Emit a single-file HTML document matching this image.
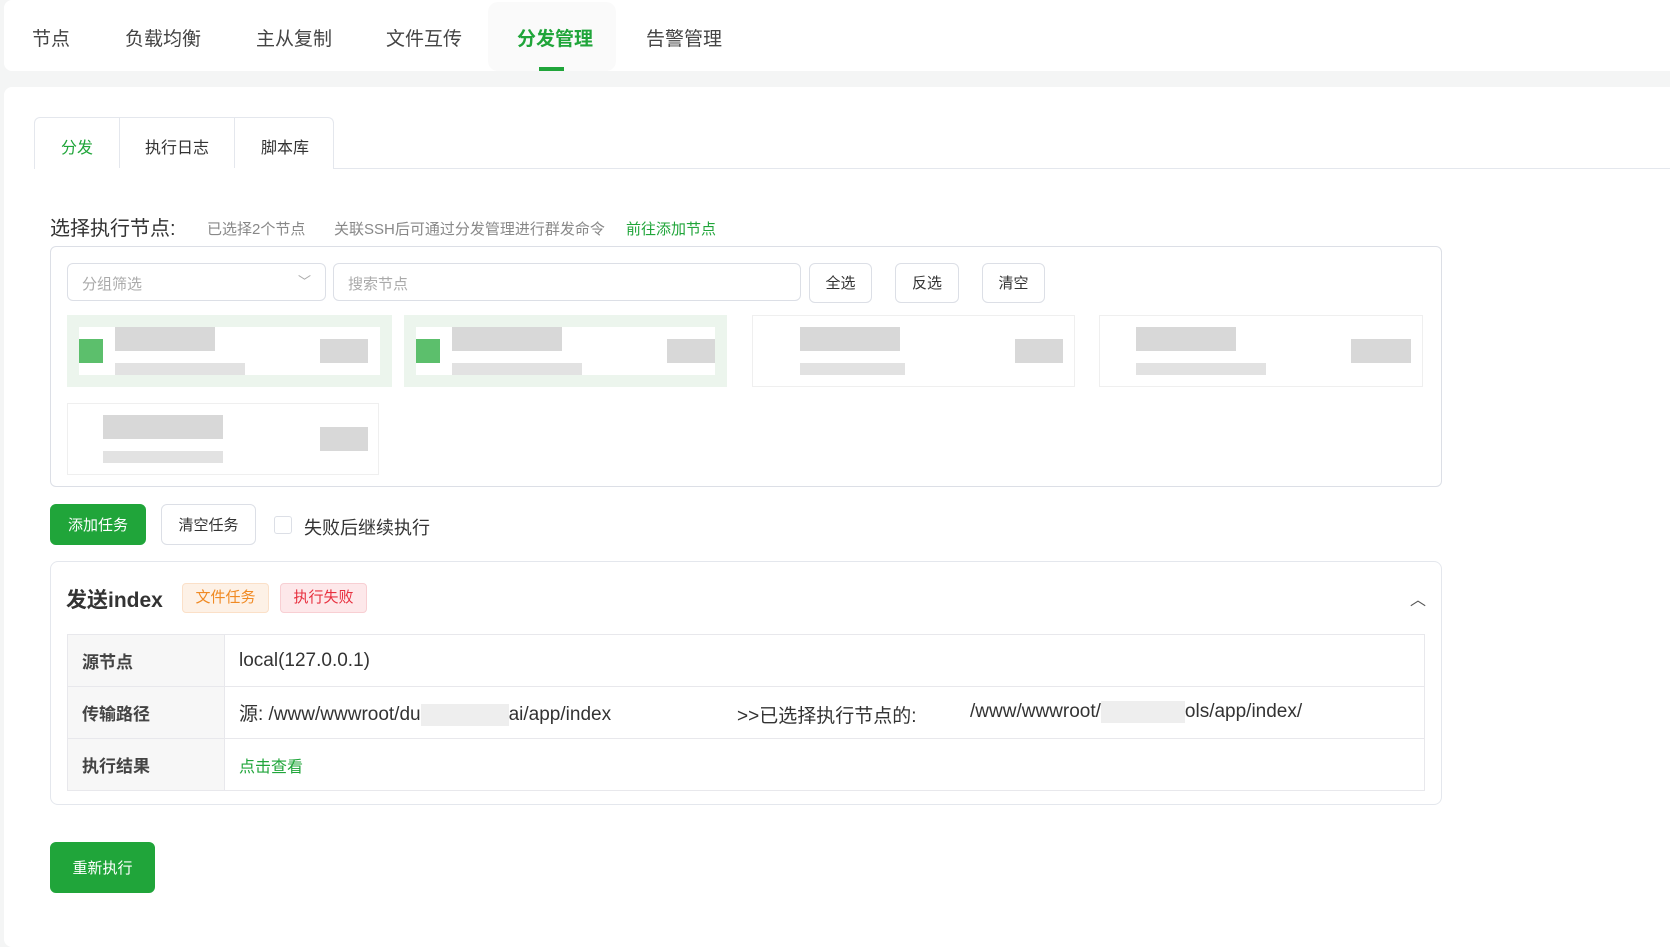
<!DOCTYPE html>
<html><head><meta charset="utf-8"><style>
*{box-sizing:border-box;margin:0;padding:0}
body{width:1670px;height:939px;background:#f4f5f5;font-family:"Liberation Sans","Noto Sans CJK SC",sans-serif;color:#333;position:relative;overflow:hidden}
.a{position:absolute}
.nav{left:4px;top:0;width:1680px;height:71px;background:#fff;border-radius:8px}
.nav span{position:absolute;top:24px;font-size:19px;color:#444}
.main{left:4px;top:87px;width:1680px;height:860px;background:#fff;border-radius:8px}
.btn{position:absolute;border:1px solid #dcdfe6;border-radius:6px;background:#fff;font-size:15px;color:#333;text-align:center}
.card{position:absolute;background:#fff;border:1px solid #eee;opacity:.9}
.px{position:absolute;background:#d8d8d8}
td{border:1px solid #e8e8ec;height:52px;font-size:19px;padding-left:14px}
td.l{background:#f7f7f7;font-weight:bold;width:157px;color:#444;font-size:17px}
</style></head><body>
<div class="a nav">
<div class="a" style="left:484px;top:2px;width:128px;height:69px;background:#fafafa;border-radius:10px"></div>
<span style="left:28px">节点</span><span style="left:121px">负载均衡</span><span style="left:252px">主从复制</span><span style="left:382px">文件互传</span><span style="left:513px;color:#20a53a;font-weight:bold">分发管理</span><span style="left:642px">告警管理</span>
<div class="a" style="left:535px;top:67px;width:25px;height:4px;background:#20a53a"></div>
</div>
<div class="a main"></div>
<div class="a" style="left:34px;top:168px;width:1640px;height:1px;background:#e4e7ed"></div>
<div class="a" style="left:34px;top:117px;width:300px;height:52px;border:1px solid #e4e7ed;border-bottom:none;border-radius:6px 6px 0 0;background:#fff"></div>
<div class="a" style="left:119px;top:117px;width:1px;height:51px;background:#e4e7ed"></div>
<div class="a" style="left:234px;top:117px;width:1px;height:51px;background:#e4e7ed"></div>
<div class="a" style="left:61px;top:134px;font-size:16px;color:#20a53a">分发</div>
<div class="a" style="left:145px;top:134px;font-size:16px">执行日志</div>
<div class="a" style="left:261px;top:134px;font-size:16px">脚本库</div>
<div class="a" style="left:50px;top:212px;font-size:20px">选择执行节点:</div>
<div class="a" style="left:207px;top:218px;font-size:15px;color:#888">已选择2个节点</div>
<div class="a" style="left:334px;top:218px;font-size:15px;color:#888">关联SSH后可通过分发管理进行群发命令</div>
<div class="a" style="left:626px;top:218px;font-size:15px;color:#20a53a">前往添加节点</div>
<div class="a" style="left:50px;top:246px;width:1392px;height:241px;border:1px solid #dcdfe6;border-radius:6px"></div>
<div class="btn" style="left:67px;top:263px;width:259px;height:38px;text-align:left;padding:9px 14px;color:#aaa">分组筛选<span style="position:absolute;right:14px;top:7px;font-size:13px">﹀</span></div>
<div class="btn" style="left:333px;top:263px;width:468px;height:38px;text-align:left;padding:9px 14px;color:#aaa">搜索节点</div>
<div class="btn" style="left:809px;top:263px;width:63px;height:40px;line-height:40px">全选</div>
<div class="btn" style="left:895px;top:263px;width:64px;height:40px;line-height:40px">反选</div>
<div class="btn" style="left:982px;top:263px;width:63px;height:40px;line-height:40px">清空</div>
<div class="card" style="left:67px;top:315px;width:325px;height:72px;border:12px solid #eaf5ec"></div>
<div class="card" style="left:404px;top:315px;width:323px;height:72px;border:12px solid #eaf5ec"></div>
<div class="card" style="left:752px;top:315px;width:323px;height:72px"></div>
<div class="card" style="left:1099px;top:315px;width:324px;height:72px"></div>
<div class="card" style="left:67px;top:403px;width:312px;height:72px"></div>
<div class="px" style="left:79px;top:339px;width:24px;height:24px;background:#5cbf6c"></div>
<div class="px" style="left:416px;top:339px;width:24px;height:24px;background:#5cbf6c"></div>
<div class="px" style="left:115px;top:327px;width:100px;height:24px"></div><div class="px" style="left:115px;top:363px;width:130px;height:12px;background:#e2e2e2"></div><div class="px" style="left:320px;top:339px;width:48px;height:24px"></div>
<div class="px" style="left:452px;top:327px;width:110px;height:24px"></div><div class="px" style="left:452px;top:363px;width:130px;height:12px;background:#e2e2e2"></div><div class="px" style="left:667px;top:339px;width:48px;height:24px"></div>
<div class="px" style="left:800px;top:327px;width:100px;height:24px"></div><div class="px" style="left:800px;top:363px;width:105px;height:12px;background:#e2e2e2"></div><div class="px" style="left:1015px;top:339px;width:48px;height:24px"></div>
<div class="px" style="left:1136px;top:327px;width:100px;height:24px"></div><div class="px" style="left:1136px;top:363px;width:130px;height:12px;background:#e2e2e2"></div><div class="px" style="left:1351px;top:339px;width:60px;height:24px"></div>
<div class="px" style="left:103px;top:415px;width:120px;height:24px"></div><div class="px" style="left:103px;top:451px;width:120px;height:12px;background:#e2e2e2"></div><div class="px" style="left:320px;top:427px;width:48px;height:24px"></div>
<div class="btn" style="left:50px;top:504px;width:96px;height:41px;line-height:41px;background:#20a53a;border-color:#20a53a;color:#fff">添加任务</div>
<div class="btn" style="left:161px;top:504px;width:95px;height:41px;line-height:41px">清空任务</div>
<div class="a" style="left:274px;top:516px;width:18px;height:18px;border:1px solid #dcdfe6;border-radius:3px"></div>
<div class="a" style="left:304px;top:514px;font-size:18px">失败后继续执行</div>
<div class="a" style="left:50px;top:561px;width:1392px;height:244px;border:1px solid #e4e7ed;border-radius:8px"></div>
<div class="a" style="left:66px;top:584px;font-size:21px;font-weight:bold">发送index</div>
<div class="a" style="left:182px;top:583px;width:87px;height:30px;background:#fdf1e6;border:1px solid #fbe0c8;border-radius:4px;color:#f08a24;font-size:15px;text-align:center;line-height:28px">文件任务</div>
<div class="a" style="left:280px;top:583px;width:87px;height:30px;background:#fde8ea;border:1px solid #f8cfd3;border-radius:4px;color:#e8303f;font-size:15px;text-align:center;line-height:28px">执行失败</div>
<div class="a" style="left:1410px;top:586px;font-size:16px;color:#555">︿</div>
<table class="a" style="left:67px;top:634px;width:1358px;border-collapse:collapse">
<tr><td class="l">源节点</td><td>local(127.0.0.1)</td></tr>
<tr><td class="l">传输路径</td><td style="position:relative">源: /www/wwwroot/du<span style="display:inline-block;width:88px;height:22px;background:#eee;vertical-align:middle"></span>ai/app/index<span style="position:absolute;left:512px;top:14px">&gt;&gt;已选择执行节点的:</span><span style="position:absolute;left:745px;top:14px">/www/wwwroot/<span style="display:inline-block;width:84px;height:22px;background:#eee;vertical-align:middle"></span>ols/app/index/</span></td></tr>
<tr><td class="l">执行结果</td><td style="color:#20a53a;font-size:16px">点击查看</td></tr>
</table>
<div class="btn" style="left:50px;top:842px;width:105px;height:51px;line-height:51px;background:#20a53a;border-color:#20a53a;color:#fff">重新执行</div>
</body></html>
